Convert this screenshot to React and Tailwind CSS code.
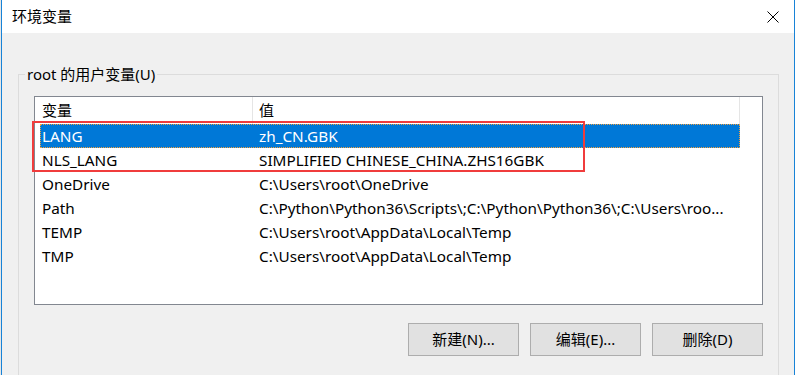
const FONT = { fontFamily: '"Noto Sans", "Noto Sans CJK SC", sans-serif' };

const rows = [
  { name: "LANG", value: "zh_CN.GBK", selected: true },
  { name: "NLS_LANG", value: "SIMPLIFIED CHINESE_CHINA.ZHS16GBK" },
  { name: "OneDrive", value: "C:\\Users\\root\\OneDrive" },
  { name: "Path", value: "C:\\Python\\Python36\\Scripts\\;C:\\Python\\Python36\\;C:\\Users\\roo..." },
  { name: "TEMP", value: "C:\\Users\\root\\AppData\\Local\\Temp" },
  { name: "TMP", value: "C:\\Users\\root\\AppData\\Local\\Temp" },
];

function CloseIcon() {
  return (
    <svg width="12" height="12" viewBox="0 0 12 12" className="block">
      <path d="M0.5 0.5 L11.5 11.5 M11.5 0.5 L0.5 11.5" stroke="#000" strokeWidth="1" fill="none" />
    </svg>
  );
}

function Button({ children }) {
  return (
    <button className="flex h-[33px] w-[111px] items-center justify-center border border-[#adadad] bg-[#e1e1e1] text-[15px] text-black">
      {children}
    </button>
  );
}

export default function App() {
  return (
    <div className="flex h-[375px] w-[795px] overflow-hidden bg-[#e9e9e9] text-[15px] text-black" style={FONT}>
      <div className="w-px shrink-0 bg-[#e6e6e6]" />
      <div className="flex w-[794px] flex-col border-x border-[#1883d7] bg-[#f0f0f0]">
        {/* title bar */}
        <div className="flex h-[33px] shrink-0 items-center justify-between bg-white pl-[10px] pr-[15px]">
          <span className="leading-none">环境变量</span>
          <CloseIcon />
        </div>

        {/* group box */}
        <div className="relative ml-[16px] mr-[15px] mt-[41px] border-x border-t border-[#dcdcdc] px-[15px] pb-[40px] pt-[21px]">
          <span className="absolute -top-[12px] left-[6px] bg-[#f0f0f0] px-[2px] leading-[22px]">root 的用户变量(U)</span>

          {/* list view */}
          <div className="relative h-[209px] w-[729px] border border-[#828790] bg-white">
            <div className="flex h-[27px] items-center pl-[5px] leading-none">
              <div className="flex h-full w-[213px] items-center border-r border-[#e5e5e5] pl-[2px]">变量</div>
              <div className="flex h-full w-[487px] items-center border-r border-[#e5e5e5] pl-[6px]">值</div>
            </div>
            {rows.map((r) => (
              <div key={r.name} className="flex h-[24px] pl-[5px] text-[15.3px]">
                <div
                  className={
                    r.selected
                      ? "flex w-[700px] items-center whitespace-nowrap bg-[#0078d7] text-white outline-1 -outline-offset-1 outline-dotted outline-[#f0a040]"
                      : "flex w-[700px] items-center whitespace-nowrap"
                  }
                >
                  <span className="w-[213px] pl-[2px]">{r.name}</span>
                  <span className="pl-[6px]">{r.value}</span>
                </div>
              </div>
            ))}

            {/* red annotation box */}
            <div className="pointer-events-none absolute left-[-3px] top-[24px] h-[51px] w-[553px] border-2 border-[#f03c3c]" />
          </div>

          {/* buttons */}
          <div className="mt-[18px] flex w-[729px] justify-end gap-[11px]">
            <Button>新建(N)...</Button>
            <Button>编辑(E)...</Button>
            <Button>删除(D)</Button>
          </div>
        </div>
      </div>
    </div>
  );
}
